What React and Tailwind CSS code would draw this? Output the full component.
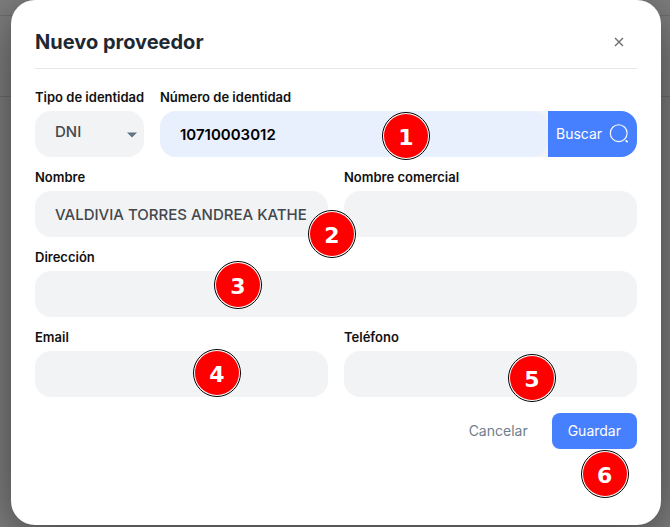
function Step({ number, className }) {
  return (
    <span
      className={`absolute z-10 flex size-12 items-center justify-center rounded-full border border-black bg-white p-px ${className}`}
    >
      <span className="flex size-full items-center justify-center rounded-full bg-[#ff0000] pt-1 font-['DejaVu_Sans',sans-serif] text-[22px] leading-none font-bold text-white">
        {number}
      </span>
    </span>
  );
}

function Field({ id, label, type = "text", value = "", className = "", children }) {
  return (
    <div className={`flex min-w-0 flex-col gap-1 ${className}`}>
      <label htmlFor={id} className="text-[13px] leading-5 font-semibold text-[#111]">
        {label}
      </label>
      <div className="relative">
        <input
          id={id}
          type={type}
          defaultValue={value}
          className="h-[46px] w-full rounded-2xl bg-[#f2f3f5] px-5 text-[15px] font-medium text-[#44474c] outline-none"
        />
        {children}
      </div>
    </div>
  );
}

function SearchIcon() {
  return (
    <svg viewBox="0 0 20 20" className="size-5" fill="none" stroke="currentColor" strokeWidth="1.1" aria-hidden="true">
      <circle cx="9.7" cy="9.2" r="8.4" />
      <path d="M16.6 16.3l2 1.8" strokeWidth="1.6" />
    </svg>
  );
}

export default function App() {
  return (
    <div className="min-h-screen overflow-hidden bg-[#808080] font-[Inter,sans-serif]">
      <div className="absolute inset-x-0 top-0" aria-hidden="true">
        <div className="h-4 border-b border-[#707070]" />
        <div className="h-[81px] border-b border-[#707070]" />
      </div>
      <div className="relative pr-[9px] pl-[11px]">
        <section
          role="dialog"
          aria-labelledby="title"
          className="w-full rounded-3xl bg-white px-6 pb-[76px] shadow-[0_10px_50px_rgba(0,0,0,0.5)]"
        >
          <header className="flex items-center justify-between border-b border-[#e4e8ec] pt-6 pb-2">
            <h1 id="title" className="text-xl leading-9 font-bold text-[#1e2833]">
              Nuevo proveedor
            </h1>
            <button type="button" aria-label="Cerrar" className="flex size-9 items-center justify-center text-[#6a6a6a]">
              <svg viewBox="0 0 10 10" className="size-[10px]" fill="none" stroke="currentColor" strokeWidth="1.3">
                <path d="M1 1l8 8M9 1l-8 8" />
              </svg>
            </button>
          </header>

          <form className="flex flex-col gap-[10px] pt-[18px]">
            <div className="flex gap-4">
              <div className="flex w-[109px] shrink-0 flex-col gap-1">
                <label htmlFor="tipo" className="text-[13px] leading-5 font-semibold whitespace-nowrap text-[#111]">
                  Tipo de identidad
                </label>
                <div className="relative">
                  <select
                    id="tipo"
                    className="h-[46px] w-full appearance-none rounded-2xl bg-[#f2f3f5] pb-1 pl-5 text-[15px] font-medium text-[#44474c] outline-none"
                  >
                    <option>DNI</option>
                  </select>
                  <svg
                    viewBox="0 0 10 6"
                    className="pointer-events-none absolute top-[21px] right-[7px] h-[6px] w-[10px]"
                    aria-hidden="true"
                  >
                    <path d="M0 0.5h10L5 5.5z" fill="#5f7485" />
                  </svg>
                </div>
              </div>
              <div className="flex min-w-0 flex-1 flex-col gap-1">
                <label htmlFor="numero" className="text-[13px] leading-5 font-semibold text-[#111]">
                  Número de identidad
                </label>
                <div className="relative flex rounded-2xl bg-[#f2f3f5]">
                  <input
                    id="numero"
                    type="text"
                    defaultValue="10710003012"
                    className="h-[46px] min-w-0 flex-1 rounded-2xl bg-[#e8f0fe] px-5 text-[15px] font-semibold text-black outline-none"
                  />
                  <button
                    type="button"
                    className="flex w-[89px] shrink-0 items-center justify-between rounded-r-2xl bg-[#4780ff] px-2 text-sm text-white"
                  >
                    Buscar
                    <SearchIcon />
                  </button>
                  <Step number={1} className="top-px left-[222px]" />
                </div>
              </div>
            </div>

            <div className="grid grid-cols-2 gap-4">
              <Field id="nombre" label="Nombre" value="VALDIVIA TORRES ANDREA KATHE">
                <Step number={2} className="top-[19px] -right-7" />
              </Field>
              <Field id="comercial" label="Nombre comercial" />
            </div>

            <Field id="direccion" label="Dirección">
              <Step number={3} className="-top-[10px] left-[179px]" />
            </Field>

            <div className="grid grid-cols-2 gap-4">
              <Field id="email" label="Email" type="email">
                <Step number={4} className="-top-[2px] left-[158px]" />
              </Field>
              <Field id="telefono" label="Teléfono" type="tel">
                <Step number={5} className="top-[3px] left-[164px]" />
              </Field>
            </div>

            <div className="flex justify-end gap-2 pt-[6px]">
              <button type="button" className="h-9 px-4 text-sm text-[#6f7e8c]">
                Cancelar
              </button>
              <div className="relative">
                <button type="submit" className="h-9 rounded-lg bg-[#4780ff] px-4 text-sm text-white">
                  Guardar
                </button>
                <Step number={6} className="top-[37px] left-[29px]" />
              </div>
            </div>
          </form>
        </section>
      </div>
    </div>
  );
}
